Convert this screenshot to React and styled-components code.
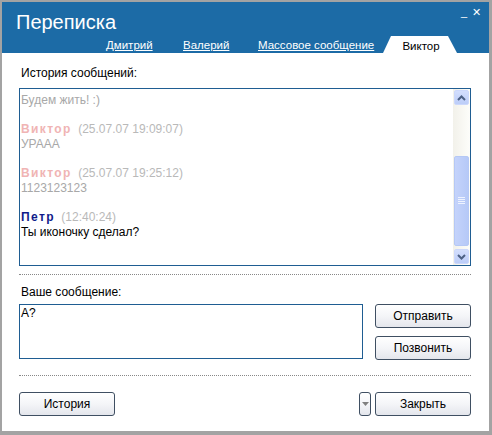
import React from "react";
import styled, { createGlobalStyle } from "styled-components";

const Global = createGlobalStyle`
  html, body { margin: 0; padding: 0; background: #fff; }
  body { font-family: "Liberation Sans", Arial, sans-serif; }
  * { box-sizing: border-box; }
`;

const Window = styled.div`
  width: 492px;
  height: 435px;
  border: 2px solid #a3a3a3;
  border-right-width: 3px;
  border-bottom-width: 4px;
  background: #fff;
  display: flex;
  flex-direction: column;
`;

const Header = styled.div`
  background: #1c6ba6;
  height: 51px;
  padding: 0 0 0 14px;
  display: flex;
  flex-direction: column;
  position: relative;
`;

const Title = styled.div`
  color: #fff;
  font-size: 20px;
  line-height: 24px;
  margin-top: 8px;
`;

const WinControls = styled.div`
  position: absolute;
  top: 4px;
  right: 8px;
  display: flex;
  gap: 5px;
  color: #fff;
  font-size: 11px;
`;

const Tabs = styled.div`
  margin-top: auto;
  display: flex;
  align-items: flex-end;
  height: 17px;
  padding-left: 90px;
`;

const TabLink = styled.span`
  color: #fff;
  font-size: 11.5px;
  text-decoration: underline;
  line-height: 15px;
  width: ${(p) => p.$w}px;
`;

const ActiveTab = styled.div`
  background: #fff;
  height: 17px;
  width: 74px;
  clip-path: polygon(8px 0, 65px 0, 74px 100%, 0 100%);
  color: #000;
  font-size: 11.5px;
  display: flex;
  justify-content: center;
  align-items: center;
  padding: 2px 0 0 2px;
`;

const Body = styled.div`
  padding: 13px 18px 0 17px;
  display: flex;
  flex-direction: column;
`;

const Label = styled.div`
  font-size: 12px;
  color: #000;
  line-height: 14px;
  margin-left: 2px;
  margin-bottom: ${(p) => p.$mb}px;
`;

const HistoryBox = styled.div`
  height: 178px;
  border: 1px solid #1f5d92;
  display: flex;
`;

const Messages = styled.div`
  flex: 1;
  padding: 4px 0 0 1px;
  font-size: 12px;
  line-height: 15px;
`;

const Msg = styled.div`
  margin-bottom: 14px;
`;

const Author = styled.span`
  font-weight: bold;
  color: ${(p) => (p.$old ? "#f0b4b4" : "#111b8a")};
  letter-spacing: 1.4px;
  margin-right: 3px;
`;

const Time = styled.span`
  color: #b9b9b9;
`;

const Text = styled.div`
  color: ${(p) => (p.$old ? "#a8a8a8" : "#000")};
`;

const Scrollbar = styled.div`
  width: 17px;
  display: flex;
  flex-direction: column;
  background: linear-gradient(90deg, #f2f1ea, #fdfdfa);
  padding: 1px 0;
`;

const ScrollBtn = styled.div`
  height: 15px;
  margin: 0 1px;
  border: 1px solid #ccd8fb;
  border-radius: 2px;
  background: linear-gradient(180deg, #d3defd, #bccdf8);
  display: flex;
  align-items: center;
  justify-content: center;
`;

const Track = styled.div`
  flex: 1;
  display: flex;
  flex-direction: column;
  justify-content: flex-end;
  padding-bottom: 3px;
`;

const Thumb = styled.div`
  height: 90px;
  margin: 0 1px;
  border: 1px solid #b5c8f5;
  border-radius: 2px;
  background: linear-gradient(90deg, #c4d3fb, #b6c9f7);
  display: flex;
  align-items: center;
  justify-content: center;
`;

const Separator = styled.div`
  border-top: 1px dotted #888;
  margin: ${(p) => p.$m};
`;

const Row = styled.div`
  display: flex;
  gap: 12px;
  align-items: flex-start;
`;

const InputBox = styled.div`
  width: 344px;
  height: 55px;
  border: 1px solid #1f5d92;
  font-size: 12px;
  padding: 1px 0 0 1px;
`;

const ButtonCol = styled.div`
  display: flex;
  flex-direction: column;
  gap: 8px;
`;

const Button = styled.div`
  width: ${(p) => p.$w || 96}px;
  height: 24px;
  border: 1px solid #3f4f62;
  border-radius: 3px;
  background: linear-gradient(180deg, #ffffff 0%, #f4f5f8 50%, #e4e6ec 100%);
  font-size: 12px;
  display: flex;
  align-items: center;
  justify-content: center;
  color: #000;
  margin-left: ${(p) => p.$ml || 0}px;
`;

const Footer = styled.div`
  display: flex;
  align-items: center;
`;

const Spacer = styled.div`
  flex: 1;
`;

const Chevron = ({ up }) => (
  <svg width="9" height="6" viewBox="0 0 9 6">
    <path
      d={up ? "M1 5 L4.5 1.5 L8 5" : "M1 1 L4.5 4.5 L8 1"}
      fill="none"
      stroke="#4d6185"
      strokeWidth="2"
    />
  </svg>
);

const Grip = () => (
  <svg width="7" height="8" viewBox="0 0 7 8">
    {[0, 2, 4, 6].map((y) => (
      <line key={y} x1="0" x2="7" y1={y + 0.5} y2={y + 0.5} stroke="#eef3ff" />
    ))}
  </svg>
);

const messages = [
  { text: "Будем жить! :)", old: true },
  { author: "Виктор", time: "(25.07.07 19:09:07)", text: "УРААА", old: true },
  { author: "Виктор", time: "(25.07.07 19:25:12)", text: "1123123123", old: true },
  { author: "Петр", time: "(12:40:24)", text: "Ты иконочку сделал?" },
];

export default function App() {
  return (
    <>
      <Global />
      <Window>
        <Header>
          <Title>Переписка</Title>
          <WinControls>
            <span>_</span>
            <span>✕</span>
          </WinControls>
          <Tabs>
            <TabLink $w={77}>Дмитрий</TabLink>
            <TabLink $w={75}>Валерий</TabLink>
            <TabLink $w={125}>Массовое сообщение</TabLink>
            <ActiveTab>Виктор</ActiveTab>
          </Tabs>
        </Header>
        <Body>
          <Label $mb={8}>История сообщений:</Label>
          <HistoryBox>
            <Messages>
              {messages.map((m, i) => (
                <Msg key={i}>
                  {m.author && (
                    <div>
                      <Author $old={m.old}>{m.author}</Author>{" "}
                      <Time>{m.time}</Time>
                    </div>
                  )}
                  <Text $old={m.old}>{m.text}</Text>
                </Msg>
              ))}
            </Messages>
            <Scrollbar>
              <ScrollBtn>
                <Chevron up />
              </ScrollBtn>
              <Track>
                <Thumb>
                  <Grip />
                </Thumb>
              </Track>
              <ScrollBtn>
                <Chevron />
              </ScrollBtn>
            </Scrollbar>
          </HistoryBox>
          <Separator $m="8px 0 10px 0" />
          <Label $mb={5}>Ваше сообщение:</Label>
          <Row>
            <InputBox>А?</InputBox>
            <ButtonCol>
              <Button>Отправить</Button>
              <Button>Позвонить</Button>
            </ButtonCol>
          </Row>
          <Separator $m="15px 0 16px 0" />
          <Footer>
            <Button>История</Button>
            <Spacer />
            <Button $w={12}>
              <svg width="7" height="4" viewBox="0 0 7 4">
                <path d="M0 0 H7 L3.5 4 Z" fill="#808080" />
              </svg>
            </Button>
            <Button $ml={4}>Закрыть</Button>
          </Footer>
        </Body>
      </Window>
    </>
  );
}
